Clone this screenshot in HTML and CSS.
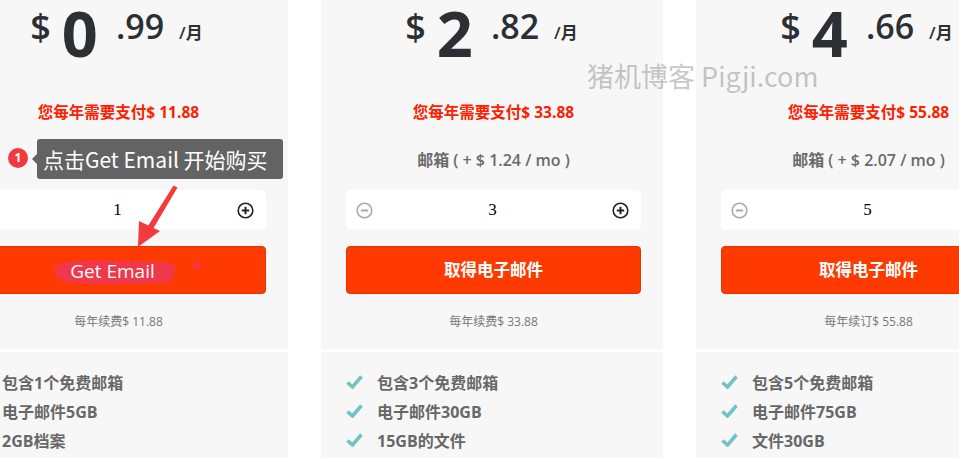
FILE: index.html
```html
<!DOCTYPE html>
<html lang="zh">
<head>
<meta charset="utf-8">
<title>Pricing</title>
<link rel="stylesheet" href="styles.css">
</head>
<body>
<div class="page">
  <div class="card">
    <div class="top">
      <div class="price"><span class="cur">$</span><span class="int">0</span><span class="dec">.99</span><span class="per">/月</span></div>
      <div class="yearly">您每年需要支付$ 11.88</div>
      <div class="mailbox">邮箱 ( + $ 0.99 / mo )</div>
      <div class="stepper">
        <svg class="ico" viewBox="0 0 17 17"><circle cx="8.5" cy="8.5" r="7.3" fill="none" stroke="#aaa" stroke-width="1.6"/><line x1="4.8" y1="8.5" x2="12.2" y2="8.5" stroke="#aaa" stroke-width="2"/></svg>
        <span class="qty">1</span>
        <svg class="ico" viewBox="0 0 17 17"><circle cx="8.5" cy="8.5" r="7.3" fill="none" stroke="#222" stroke-width="1.6"/><line x1="4.8" y1="8.5" x2="12.2" y2="8.5" stroke="#222" stroke-width="2"/><line x1="8.5" y1="4.8" x2="8.5" y2="12.2" stroke="#222" stroke-width="2"/></svg>
      </div>
      <div class="btn btn-en"><span class="btn-en-text">Get Email</span></div>
      <div class="renew">每年续费$ 11.88</div>
    </div>
    <ul class="features">
      <li><svg class="check" viewBox="0 0 17 15"><path d="M1.5 8.5 L6.5 13 L15.5 2.5" fill="none" stroke="#72c4c4" stroke-width="3.6"/></svg>包含1个免费邮箱</li>
      <li><svg class="check" viewBox="0 0 17 15"><path d="M1.5 8.5 L6.5 13 L15.5 2.5" fill="none" stroke="#72c4c4" stroke-width="3.6"/></svg>电子邮件5GB</li>
      <li><svg class="check" viewBox="0 0 17 15"><path d="M1.5 8.5 L6.5 13 L15.5 2.5" fill="none" stroke="#72c4c4" stroke-width="3.6"/></svg>2GB档案</li>
    </ul>
  </div>

  <div class="card">
    <div class="top">
      <div class="price"><span class="cur">$</span><span class="int">2</span><span class="dec">.82</span><span class="per">/月</span></div>
      <div class="yearly">您每年需要支付$ 33.88</div>
      <div class="mailbox">邮箱 ( + $ 1.24 / mo )</div>
      <div class="stepper">
        <svg class="ico" viewBox="0 0 17 17"><circle cx="8.5" cy="8.5" r="7.3" fill="none" stroke="#aaa" stroke-width="1.6"/><line x1="4.8" y1="8.5" x2="12.2" y2="8.5" stroke="#aaa" stroke-width="2"/></svg>
        <span class="qty">3</span>
        <svg class="ico" viewBox="0 0 17 17"><circle cx="8.5" cy="8.5" r="7.3" fill="none" stroke="#222" stroke-width="1.6"/><line x1="4.8" y1="8.5" x2="12.2" y2="8.5" stroke="#222" stroke-width="2"/><line x1="8.5" y1="4.8" x2="8.5" y2="12.2" stroke="#222" stroke-width="2"/></svg>
      </div>
      <div class="btn">取得电子邮件</div>
      <div class="renew">每年续费$ 33.88</div>
    </div>
    <ul class="features">
      <li><svg class="check" viewBox="0 0 17 15"><path d="M1.5 8.5 L6.5 13 L15.5 2.5" fill="none" stroke="#72c4c4" stroke-width="3.6"/></svg>包含3个免费邮箱</li>
      <li><svg class="check" viewBox="0 0 17 15"><path d="M1.5 8.5 L6.5 13 L15.5 2.5" fill="none" stroke="#72c4c4" stroke-width="3.6"/></svg>电子邮件30GB</li>
      <li><svg class="check" viewBox="0 0 17 15"><path d="M1.5 8.5 L6.5 13 L15.5 2.5" fill="none" stroke="#72c4c4" stroke-width="3.6"/></svg>15GB的文件</li>
    </ul>
  </div>

  <div class="card">
    <div class="top">
      <div class="price"><span class="cur">$</span><span class="int">4</span><span class="dec">.66</span><span class="per">/月</span></div>
      <div class="yearly">您每年需要支付$ 55.88</div>
      <div class="mailbox">邮箱 ( + $ 2.07 / mo )</div>
      <div class="stepper">
        <svg class="ico" viewBox="0 0 17 17"><circle cx="8.5" cy="8.5" r="7.3" fill="none" stroke="#aaa" stroke-width="1.6"/><line x1="4.8" y1="8.5" x2="12.2" y2="8.5" stroke="#aaa" stroke-width="2"/></svg>
        <span class="qty">5</span>
        <svg class="ico" viewBox="0 0 17 17"><circle cx="8.5" cy="8.5" r="7.3" fill="none" stroke="#222" stroke-width="1.6"/><line x1="4.8" y1="8.5" x2="12.2" y2="8.5" stroke="#222" stroke-width="2"/><line x1="8.5" y1="4.8" x2="8.5" y2="12.2" stroke="#222" stroke-width="2"/></svg>
      </div>
      <div class="btn">取得电子邮件</div>
      <div class="renew">每年续订$ 55.88</div>
    </div>
    <ul class="features">
      <li><svg class="check" viewBox="0 0 17 15"><path d="M1.5 8.5 L6.5 13 L15.5 2.5" fill="none" stroke="#72c4c4" stroke-width="3.6"/></svg>包含5个免费邮箱</li>
      <li><svg class="check" viewBox="0 0 17 15"><path d="M1.5 8.5 L6.5 13 L15.5 2.5" fill="none" stroke="#72c4c4" stroke-width="3.6"/></svg>电子邮件75GB</li>
      <li><svg class="check" viewBox="0 0 17 15"><path d="M1.5 8.5 L6.5 13 L15.5 2.5" fill="none" stroke="#72c4c4" stroke-width="3.6"/></svg>文件30GB</li>
    </ul>
  </div>
</div>

<div class="watermark">猪机博客 Pigji.com</div>
<div class="badge">1</div>
<div class="tip">点击Get Email 开始购买</div>
<svg class="annot" viewBox="0 0 300 300" width="300" height="300">
  <path d="M62 271 C80 266 120 268 168 270" fill="none" stroke="#f0384a" stroke-width="15" stroke-linecap="round"/>
  <path d="M66 278 C100 281 140 280 168 278" fill="none" stroke="#f0384a" stroke-width="9" stroke-linecap="round"/>
  <circle cx="197" cy="266" r="3.6" fill="#f0384a"/>
  <polygon points="173.5,185.5 177.5,187.5 153,229 148,226" fill="#f33a3f"/>
  <polygon points="138,247 139,221 160,231" fill="#f33a3f"/>
</svg>
</body>
</html>
```

FILE: styles.css
```css
html, body {
  margin: 0;
  padding: 0;
  background: #fff;
  overflow: hidden;
}
body {
  position: relative;
  width: 959px;
  height: 458px;
  font-family: "Open Sans", "Noto Sans CJK SC", sans-serif;
}
.page {
  display: flex;
  gap: 33px;
  margin-left: -54px;
  width: 1100px;
}
.card {
  flex: 0 0 342px;
  display: flex;
  flex-direction: column;
  gap: 3px;
}
.top {
  background: #f7f7f7;
  height: 349px;
  box-sizing: border-box;
  padding: 1px 22px 0 25px;
  display: flex;
  flex-direction: column;
  align-items: stretch;
}
.price {
  height: 59px;
  display: flex;
  justify-content: center;
  align-items: flex-start;
  color: #2c2f33;
  line-height: 1;
  font-family: "Open Sans", sans-serif;
  padding-right: 4px;
}
.cur {
  font-size: 36px;
  font-weight: 600;
  margin-top: 8px;
  margin-right: 11px;
}
.int {
  font-size: 63px;
  font-weight: 700;
  margin-right: 18px;
}
.dec {
  font-size: 34px;
  font-weight: 600;
  margin-top: 8px;
  margin-right: 15px;
}
.per {
  font-size: 17px;
  font-weight: 600;
  margin-top: 23px;
  font-family: "Open Sans", "Noto Sans CJK SC", sans-serif;
}
.yearly {
  margin-top: 42px;
  height: 20px;
  line-height: 20px;
  text-align: center;
  color: #ff2000;
  font-size: 15.5px;
  font-weight: 700;
  font-family: "Open Sans", "Noto Sans CJK SC", sans-serif;
}
.mailbox {
  margin-top: 28px;
  height: 20px;
  line-height: 20px;
  text-align: center;
  color: #6a6a6a;
  font-size: 16px;
  font-weight: 600;
}
.stepper {
  margin-top: 20px;
  height: 40px;
  background: #fff;
  border-radius: 5px;
  display: flex;
  align-items: center;
  padding: 0 12px 0 10px;
}
.ico {
  width: 17px;
  height: 17px;
  flex: 0 0 17px;
}
.qty {
  flex: 1;
  text-align: center;
  font-family: "Liberation Serif", serif;
  font-size: 17px;
  color: #000;
}
.btn {
  margin-top: 16px;
  height: 48px;
  box-sizing: border-box;
  background: #ff3a00;
  border: 1px solid #e53400;
  border-radius: 4px;
  color: #fff;
  font-size: 16.5px;
  font-weight: 700;
  display: flex;
  align-items: center;
  justify-content: center;
  padding-bottom: 2px;
  font-family: "Noto Sans CJK SC", sans-serif;
}
.btn-en {
  font-family: "Open Sans", sans-serif;
  font-weight: 400;
  font-size: 19px;
  padding-bottom: 0;
  padding-top: 2px;
}
.btn-en-text {
  position: relative;
  z-index: 2;
  margin-right: 12px;
}
.renew {
  margin-top: 20px;
  height: 16px;
  line-height: 16px;
  text-align: center;
  font-size: 12px;
  color: #777;
}
.features {
  list-style: none;
  margin: 0;
  background: #f7f7f7;
  padding: 15px 0 0 25px;
  height: 120px;
}
.features li {
  height: 29px;
  display: flex;
  align-items: center;
  color: #676767;
  font-size: 16px;
  font-weight: 700;
  font-family: "Open Sans", "Noto Sans CJK SC", sans-serif;
}
.check {
  width: 17px;
  height: 15px;
  margin-right: 14px;
  flex: 0 0 17px;
}
.watermark {
  position: absolute;
  left: 587px;
  top: 57px;
  font-size: 27px;
  line-height: 38px;
  color: rgba(110, 110, 110, 0.4);
  font-family: "Noto Sans CJK SC", sans-serif;
  white-space: nowrap;
}
.badge {
  position: absolute;
  left: 8px;
  top: 148px;
  width: 20px;
  height: 20px;
  border-radius: 50%;
  background: #f23a3e;
  color: #fff;
  font-size: 12px;
  font-weight: 700;
  line-height: 20px;
  text-align: center;
}
.tip {
  position: absolute;
  left: 37px;
  top: 139px;
  width: 246px;
  height: 40px;
  box-sizing: border-box;
  padding-left: 6px;
  background: #636363;
  border-radius: 3px;
  color: #fff;
  font-size: 21px;
  line-height: 40px;
  white-space: nowrap;
  font-family: "Noto Sans CJK SC", sans-serif;
}
.tip::before {
  content: "";
  position: absolute;
  left: -5px;
  top: 15px;
  border-style: solid;
  border-width: 5px 5px 5px 0;
  border-color: transparent #636363 transparent transparent;
}
.annot {
  position: absolute;
  left: 0;
  top: 0;
  z-index: 1;
  pointer-events: none;
}
```
